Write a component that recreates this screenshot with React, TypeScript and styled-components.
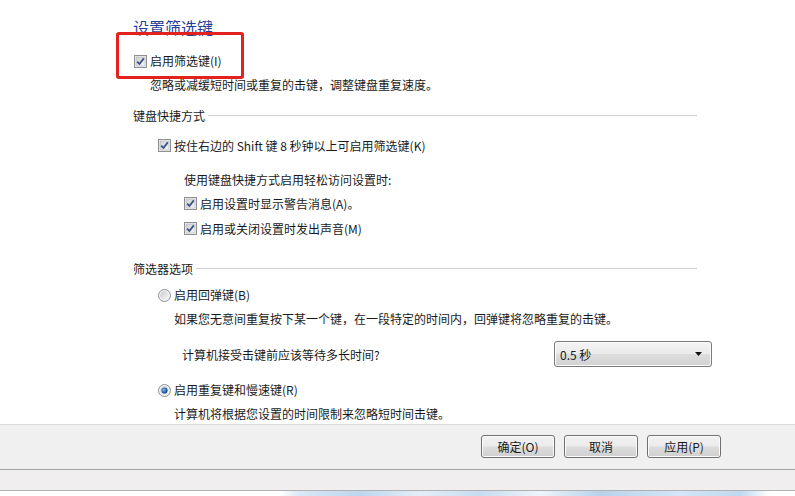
import React from "react";
import styled, { createGlobalStyle } from "styled-components";

const Global = createGlobalStyle`
  html, body { margin: 0; padding: 0; background: #ffffff; }
  body { font-family: "Noto Sans CJK SC", "Microsoft YaHei", sans-serif; font-size: 12px; color: #1a1a1a; }
  * { box-sizing: border-box; }
`;

const Page = styled.div`
  position: relative;
  width: 795px;
  height: 496px;
  display: flex;
  flex-direction: column;
  overflow: hidden;
  background: #ffffff;
`;

const Content = styled.div`
  height: 424px;
  overflow: hidden;
  padding: 17px 98px 0 133px;
  display: flex;
  flex-direction: column;
`;

const Title = styled.div`
  font-size: 16px;
  line-height: 20px;
  height: 20px;
  color: #1e3a8a;
  color: #1f3f9a;
  white-space: nowrap;
`;

const Row = styled.div<{ $mt: number; $indent: number }>`
  margin-top: ${(p) => p.$mt}px;
  padding-left: ${(p) => p.$indent}px;
  height: 20px;
  line-height: 20px;
  display: flex;
  align-items: center;
  gap: 3px;
  white-space: nowrap;
`;

const Text = styled.span`
  font-size: 12px;
  color: #1a1a1a;
`;

const SectionHead = styled.div<{ $mt: number }>`
  margin-top: ${(p) => p.$mt}px;
  height: 20px;
  display: flex;
  align-items: center;
  gap: 3px;
  white-space: nowrap;
  font-size: 12px;
  color: #1a1a1a;
`;

const Rule = styled.div`
  flex: 1;
  height: 1px;
  background: #cfcfcf;
`;

const WaitRow = styled.div`
  margin-top: 12px;
  padding-left: 49px;
  height: 26px;
  display: grid;
  grid-template-columns: 372px 158px;
  align-items: center;
  white-space: nowrap;
`;

const Combo = styled.div`
  height: 26px;
  border: 1px solid #7a7a7a;
  border-radius: 3px;
  background: linear-gradient(#f4f4f4 0%, #ebebeb 48%, #dddddd 52%, #d2d2d2 100%);
  box-shadow: inset 0 0 0 1px #fbfbfb;
  display: flex;
  align-items: center;
  justify-content: space-between;
  padding: 0 8px 0 5px;
  font-size: 12px;
  color: #1a1a1a;
`;

const Footer = styled.div`
  height: 46px;
  border-top: 1px solid #d9d9d9;
  border-bottom: 1px solid #a3a3a3;
  background: #f0f0f0;
  display: flex;
  justify-content: flex-end;
  align-items: flex-start;
  gap: 9px;
  padding: 10px 74px 0 0;
`;

const Button = styled.div`
  width: 74px;
  height: 23px;
  border: 1px solid #707070;
  border-radius: 3px;
  background: linear-gradient(#f2f2f2 0%, #ebebeb 48%, #dddddd 52%, #cfcfcf 100%);
  box-shadow: inset 0 0 0 1px #fbfbfb;
  display: flex;
  align-items: center;
  justify-content: center;
  font-size: 12px;
  color: #1a1a1a;
`;

const Strip = styled.div`
  height: 21px;
  background: #f0eeee;
  border-bottom: 1px solid #b0b0b0;
`;

const Desk = styled.div`
  flex: 1;
  background:
    linear-gradient(90deg, transparent 0, transparent 280px, #d8e8f6 300px, #bcd6ee 360px, #e4eef8 420px, #c6dcf0 480px, #eef4fa 540px, #b8d2ec 600px, #d4e6f6 680px, #c0d8f0 740px, transparent 770px);
`;

const Highlight = styled.div`
  position: absolute;
  left: 116px;
  top: 32px;
  width: 128px;
  height: 47px;
  border: 3px solid #e3221f;
  border-radius: 3px;
  pointer-events: none;
`;

const Check = () => (
  <svg width="13" height="13" viewBox="0 0 13 13">
    <defs>
      <linearGradient id="cbg" x1="0" y1="0" x2="1" y2="1">
        <stop offset="0" stopColor="#cbcfd5" />
        <stop offset="1" stopColor="#f6f6f6" />
      </linearGradient>
    </defs>
    <rect x="0.5" y="0.5" width="12" height="12" fill="#f4f4f4" stroke="#8e8f8f" />
    <rect x="2" y="2" width="9" height="9" fill="url(#cbg)" stroke="#aeb3b9" strokeWidth="0.6" />
    <path d="M3.2 6.6 L5.4 9 L9.8 3.4" fill="none" stroke="#3b4f82" strokeWidth="1.8" strokeLinejoin="round" />
  </svg>
);

const Radio = ({ on }: { on?: boolean }) => (
  <svg width="13" height="13" viewBox="0 0 13 13">
    <defs>
      <linearGradient id="rbg" x1="0" y1="0" x2="1" y2="1">
        <stop offset="0" stopColor="#c9ccd1" />
        <stop offset="1" stopColor="#f7f7f7" />
      </linearGradient>
      <radialGradient id="rdot" cx="0.4" cy="0.4" r="0.6">
        <stop offset="0" stopColor="#8cc4f0" />
        <stop offset="0.6" stopColor="#2b6cb4" />
        <stop offset="1" stopColor="#1d4a86" />
      </radialGradient>
    </defs>
    <circle cx="6.5" cy="6.5" r="6" fill="#f4f4f4" stroke="#8e8f8f" />
    <circle cx="6.5" cy="6.5" r="4.4" fill="url(#rbg)" />
    {on && <circle cx="6.5" cy="6.5" r="3.1" fill="url(#rdot)" />}
  </svg>
);

const Arrow = () => (
  <svg width="8" height="5" viewBox="0 0 8 5">
    <path d="M0 0 H7 L3.5 4 Z" fill="#111" />
  </svg>
);

export default function App() {
  return (
    <Page>
      <Global />
      <Content>
        <Title>设置筛选键</Title>
        <Row $mt={14} $indent={1}>
          <Check />
          <Text>启用筛选键(I)</Text>
        </Row>
        <Row $mt={4} $indent={17}>
          <Text>忽略或减缓短时间或重复的击键，调整键盘重复速度。</Text>
        </Row>
        <SectionHead $mt={11}>
          键盘快捷方式
          <Rule />
        </SectionHead>
        <Row $mt={10} $indent={25}>
          <Check />
          <Text>按住右边的 Shift 键 8 秒钟以上可启用筛选键(K)</Text>
        </Row>
        <Row $mt={14} $indent={51}>
          <Text>使用键盘快捷方式启用轻松访问设置时:</Text>
        </Row>
        <Row $mt={4} $indent={51}>
          <Check />
          <Text>启用设置时显示警告消息(A)。</Text>
        </Row>
        <Row $mt={5} $indent={51}>
          <Check />
          <Text>启用或关闭设置时发出声音(M)</Text>
        </Row>
        <SectionHead $mt={20}>
          筛选器选项
          <Rule />
        </SectionHead>
        <Row $mt={7} $indent={25}>
          <Radio />
          <Text>启用回弹键(B)</Text>
        </Row>
        <Row $mt={4} $indent={41}>
          <Text>如果您无意间重复按下某一个键，在一段特定的时间内，回弹键将忽略重复的击键。</Text>
        </Row>
        <WaitRow>
          <Text>计算机接受击键前应该等待多长时间?</Text>
          <Combo>
            <span>0.5 秒</span>
            <Arrow />
          </Combo>
        </WaitRow>
        <Row $mt={13} $indent={25}>
          <Radio on />
          <Text>启用重复键和慢速键(R)</Text>
        </Row>
        <Row $mt={4} $indent={41}>
          <Text>计算机将根据您设置的时间限制来忽略短时间击键。</Text>
        </Row>
      </Content>
      <Footer>
        <Button>确定(O)</Button>
        <Button>取消</Button>
        <Button>应用(P)</Button>
      </Footer>
      <Strip />
      <Desk />
      <Highlight />
    </Page>
  );
}
